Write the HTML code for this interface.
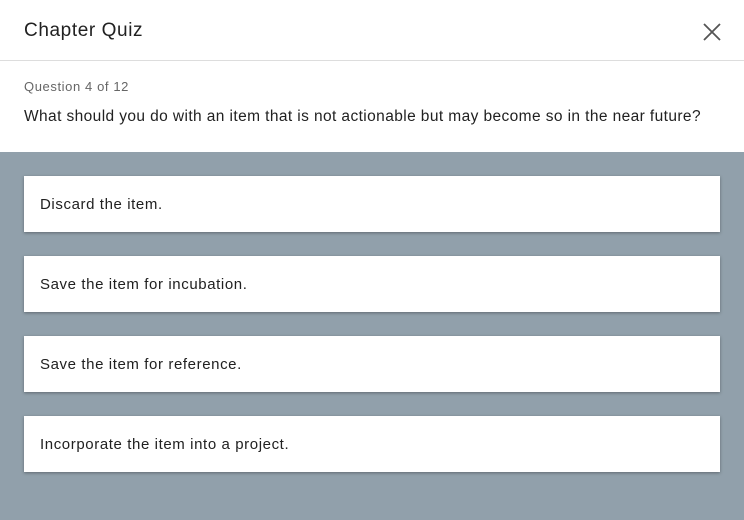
<!DOCTYPE html>
<html><head><style>
*{margin:0;padding:0;box-sizing:border-box}
body{width:744px;height:520px;overflow:hidden;background:#fff;font-family:"Liberation Sans",sans-serif;color:#212121}
.hdr{height:61px;border-bottom:1px solid #ddd;position:relative}
.hdr h1{position:absolute;left:24px;top:20px;font-size:19px;font-weight:normal;letter-spacing:0.6px}
.x{position:absolute;left:703px;top:23px}
.q{height:91px;position:relative}
.lbl{position:absolute;left:24px;top:18px;font-size:13px;color:#666;letter-spacing:0.6px}
.qt{position:absolute;left:24px;top:47px;font-size:15.5px;letter-spacing:0.4px;white-space:nowrap}
.area{position:absolute;top:152px;left:0;width:744px;height:368px;background:#91a0ab}
.card{position:absolute;left:24px;width:696px;height:56px;background:#fff;box-shadow:0 1px 3px rgba(0,0,0,.35);font-size:15px;padding-left:16px;line-height:58px;letter-spacing:0.6px}
</style></head><body>
<div class="hdr"><h1>Chapter Quiz</h1>
<svg class="x" width="18" height="18" viewBox="0 0 18 18"><path d="M1 1L17 17M17 1L1 17" stroke="#555" stroke-width="1.8" fill="none"/></svg></div>
<div class="q"><div class="lbl">Question 4 of 12</div><div class="qt">What should you do with an item that is not actionable but may become so in the near future?</div></div>
<div class="area">
<div class="card" style="top:24px">Discard the item.</div>
<div class="card" style="top:104px">Save the item for incubation.</div>
<div class="card" style="top:184px">Save the item for reference.</div>
<div class="card" style="top:264px">Incorporate the item into a project.</div>
</div>
</body></html>
